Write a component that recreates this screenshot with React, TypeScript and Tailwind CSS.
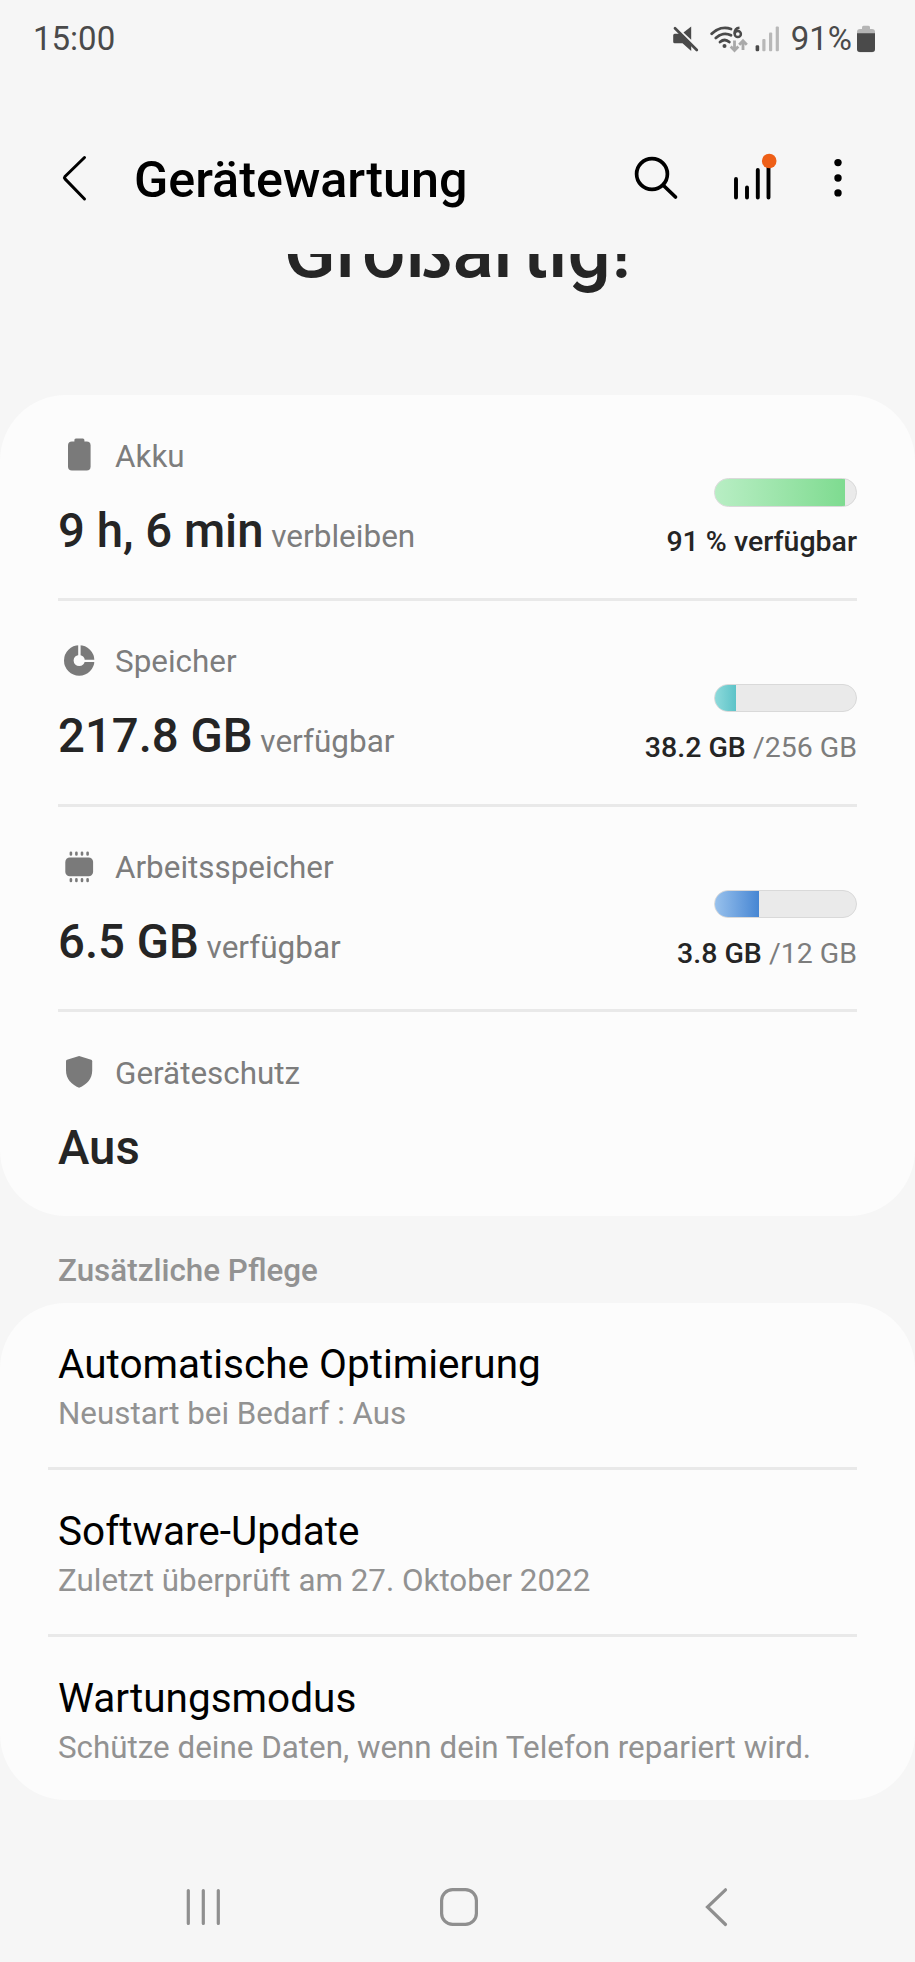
import type { ReactNode } from "react";

interface StatRowProps {
  icon: ReactNode;
  label: string;
  value: string;
  suffix?: string;
  percent?: number;
  barClass?: string;
  used?: string;
  total?: string;
  last?: boolean;
}

interface CareItemProps {
  title: string;
  subtitle: string;
  last?: boolean;
}

const BatteryIcon = () => (
  <svg width="42" height="40" viewBox="0 0 42 40" fill="#7a7a7a">
    <rect x="10" y="5.6" width="22.6" height="28.8" rx="4" />
    <rect x="16.4" y="2.6" width="10" height="6" rx="1.5" />
  </svg>
);

const StorageIcon = () => (
  <svg width="42" height="40" viewBox="0 0 42 40" fill="none">
    <circle cx="21.2" cy="18.5" r="10.4" stroke="#7a7a7a" strokeWidth="9.6" />
    <path d="M21.4 3v14M22 18.9h15" stroke="#fcfcfc" strokeWidth="2.4" />
  </svg>
);

const MemoryIcon = () => (
  <svg width="42" height="40" viewBox="0 0 42 40" fill="#7a7a7a">
    <rect x="7.3" y="9.5" width="27.8" height="18.8" rx="4.5" />
    <path
      d="M12.9 4.8v1.6M18.4 4.8v1.6M24 4.8v1.6M29.6 4.8v1.6M12.9 31.3v1.6M18.4 31.3v1.6M24 31.3v1.6M29.6 31.3v1.6"
      stroke="#7a7a7a"
      strokeWidth="2.6"
      strokeLinecap="round"
    />
  </svg>
);

const ShieldIcon = () => (
  <svg width="42" height="40" viewBox="0 0 42 40" fill="#7a7a7a">
    <path d="M21.1 3 33.2 6.8q1 .4 1 1.4V17.5c0 8-5.2 14.2-13.1 17.2C13.2 31.7 8 25.5 8 17.5V8.2q0-1 1-1.4Z" />
  </svg>
);

function StatRow({ icon, label, value, suffix, percent, barClass, used, total, last }: StatRowProps) {
  return (
    <div className={`flex h-[205.8px] justify-between ${last ? "" : "border-b-[3px] border-[#e9e9e9]"}`}>
      <div className="pt-[41px]">
        <div className="flex h-[40px] items-center gap-[15px] text-[31.4px] leading-[40px] text-[#7d7d7d]">
          {icon}
          <span className="pt-px">{label}</span>
        </div>
        <p className="mt-[27.5px] text-[31.5px] leading-[54px] whitespace-nowrap text-[#7d7d7d]">
          <span className="text-[47.3px] font-medium text-[#252525]">{value}</span>
          {suffix && <span> {suffix}</span>}
        </p>
      </div>

      {percent !== undefined && (
        <div className="flex flex-col items-end pt-[83px]">
          <div className="h-[28.5px] w-[143px] overflow-hidden rounded-full border border-[#d9d9d9] bg-[#eaeaea]">
            <div className={`h-full bg-linear-to-r ${barClass}`} style={{ width: `${percent}%` }} />
          </div>
          <p className="mt-[17.5px] text-[28.5px] leading-[36px] whitespace-nowrap text-[#7d7d7d]">
            <span className="font-medium text-[#252525]">{used}</span>
            {total && <span> {total}</span>}
          </p>
        </div>
      )}
    </div>
  );
}

function CareItem({ title, subtitle, last }: CareItemProps) {
  return (
    <div className={`h-[166.8px] pt-[41px] pl-[10px] whitespace-nowrap ${last ? "" : "border-b-[3px] border-[#e9e9e9]"}`}>
      <h3 className="text-[40.5px] leading-[40px] text-black">{title}</h3>
      <p className="mt-[10px] text-[31.35px] leading-[40px] text-[#929292]">{subtitle}</p>
    </div>
  );
}

function StatusBar() {
  return (
    <div className="flex h-[78px] items-center justify-between pr-[40px] pl-[33px] text-[33px] leading-[40px] text-[#4a4a4a]">
      <span>15:00</span>
      <div className="flex items-center">
        <svg width="26" height="28" viewBox="0 0 26 28" fill="#4a4a4a">
          <path d="M18.2 1.5V14.8L10.500 7.600Z" />
          <path d="M1.700 8.700H8L18.200 19.500V26L9.500 18.300H1.700Q.2 18.300.2 16.800V10.200Q.2 8.700 1.700 8.700Z" />
          <path d="M2 3.2 23.800 25" stroke="#4a4a4a" strokeWidth="2.7" strokeLinecap="round" />
        </svg>
        <svg className="ml-[11px]" width="38" height="28" viewBox="0 0 38 28" fill="none">
          <g stroke="#4a4a4a" strokeWidth="2.8" strokeLinecap="round">
            <path d="M1.7 8.8C7 3.3 14.5 1.6 21 4" />
            <path d="M5.8 13C10 8.8 16 7.8 21 10.3" />
            <path d="M10 17c3-2.6 6.5-2.6 9.3 0" />
          </g>
          <circle cx="14.5" cy="21" r="2" fill="#4a4a4a" />
          <path d="M29.5 2.8C26.5 3 24.6 5.3 24.6 8.7" stroke="#4a4a4a" strokeWidth="2.6" />
          <circle cx="27.8" cy="9" r="3.1" stroke="#4a4a4a" strokeWidth="2.5" />
          <g stroke="#a9a9a9" strokeWidth="2.8">
            <path d="M24.5 15.5v10M20.7 21.5l3.8 4 3.8-4" />
            <path d="M33 25V16M29.2 19.8l3.8-4 3.8 4" />
          </g>
        </svg>
        <svg className="ml-[7px]" width="25" height="28" viewBox="0 0 25 28" fill="#b8b8b8">
          <rect x=".6" y="20.3" width="3.6" height="6" rx="1.3" fill="#4a4a4a" />
          <rect x="7.3" y="14" width="3.2" height="12.3" rx="1" />
          <rect x="14" y="7.5" width="3.2" height="18.8" rx="1" />
          <rect x="20.7" y="1.5" width="3.2" height="24.8" rx="1" />
        </svg>
        <span className="ml-[11px]">91%</span>
        <svg className="ml-[5px]" width="18" height="28" viewBox="0 0 18 28" fill="#b5b5b5">
          <rect x="5" y=".7" width="8" height="6" rx="1.5" />
          <rect x="0" y="4" width="18" height="23.3" rx="3" />
          <path d="M0 8.3h18v15.7q0 3-3 3H3q-3 0-3-3Z" fill="#4a4a4a" />
        </svg>
      </div>
    </div>
  );
}

function Header() {
  return (
    <header className="flex h-[176px] items-center pt-[24px] pr-[72px] pl-[61px]">
      <svg width="26" height="48" viewBox="0 0 26 48" fill="none" stroke="#000" strokeWidth="3" strokeLinecap="round" strokeLinejoin="round">
        <path d="M23.5 3.5 4 22.5q-1 1.2 0 2.4L23.5 45" />
      </svg>
      <h1 className="ml-[47px] flex-1 pt-[4px] text-[50.3px] leading-[56px] font-medium text-black">Gerätewartung</h1>
      <svg width="46" height="48" viewBox="0 0 46 48" fill="none" stroke="#000" strokeWidth="3.7" strokeLinecap="round">
        <circle cx="19" cy="20" r="15.4" />
        <path d="m30.5 31.5 12 11.5" />
      </svg>
      <svg className="ml-[54px]" width="46" height="60" viewBox="0 0 46 60" fill="none" stroke="#000" strokeWidth="3.9" strokeLinecap="round">
        <path d="M3 31v18.5M14 39.5v10M24.8 22v27.5M35.5 18v31.5" />
        <circle cx="36.2" cy="13" r="7.3" fill="#ee5f17" stroke="none" />
      </svg>
      <svg className="ml-[54px]" width="10" height="48" viewBox="0 0 10 48">
        <circle cx="5" cy="8.6" r="3.7" />
        <circle cx="5" cy="24" r="3.7" />
        <circle cx="5" cy="38.9" r="3.7" />
      </svg>
    </header>
  );
}

function NavBar() {
  return (
    <nav className="flex items-center pt-[87px] pl-[185px]">
      <svg width="38" height="40" viewBox="0 0 38 40" stroke="#8f8f8f" strokeWidth="3.2" strokeLinecap="round">
        <path d="M3.3 3.5v33M18.3 3.5v33M33.3 3.5v33" />
      </svg>
      <svg className="ml-[216px]" width="40" height="40" viewBox="0 0 40 40" fill="none" stroke="#8f8f8f" strokeWidth="3.2">
        <rect x="2.6" y="2.6" width="34.8" height="34.8" rx="11" />
      </svg>
      <svg className="ml-[226px]" width="24" height="40" viewBox="0 0 24 40" fill="none" stroke="#8f8f8f" strokeWidth="3.2" strokeLinecap="round">
        <path d="M20.5 2.8 2.5 20l18 17.5" />
      </svg>
    </nav>
  );
}

export default function App() {
  return (
    <div className="h-[1962px] w-[915px] overflow-hidden bg-[#f6f6f6] font-['Roboto',sans-serif]">
      <StatusBar />
      <Header />

      {/* headline scrolled partly under the header */}
      <div className="flex h-[141px] items-start justify-center overflow-hidden">
        <h2 className="-mt-[48px] text-[76.5px] leading-[91px] font-medium text-[#252525]">Großartig!</h2>
      </div>

      <section className="h-[821px] rounded-[66px] bg-[#fcfcfc] px-[58px]">
        <StatRow
          icon={<BatteryIcon />}
          label="Akku"
          value="9 h, 6 min"
          suffix="verbleiben"
          percent={92}
          barClass="from-[#b8eec4] to-[#7edb90]"
          used="91 % verfügbar"
        />
        <StatRow
          icon={<StorageIcon />}
          label="Speicher"
          value="217.8 GB"
          suffix="verfügbar"
          percent={14.9}
          barClass="from-[#8ddadb] to-[#5cc3c8]"
          used="38.2 GB"
          total="/256 GB"
        />
        <StatRow
          icon={<MemoryIcon />}
          label="Arbeitsspeicher"
          value="6.5 GB"
          suffix="verfügbar"
          percent={31}
          barClass="from-[#98c1ec] to-[#4686d3]"
          used="3.8 GB"
          total="/12 GB"
        />
        <StatRow icon={<ShieldIcon />} label="Geräteschutz" value="Aus" last />
      </section>

      <h2 className="h-[87px] pt-[35px] pl-[58px] text-[31.4px] leading-[40px] font-medium text-[#929292]">
        Zusätzliche Pflege
      </h2>

      <section className="h-[497px] rounded-[66px] bg-[#fcfcfc] pr-[58px] pl-[48px]">
        <CareItem title="Automatische Optimierung" subtitle="Neustart bei Bedarf : Aus" />
        <CareItem title="Software-Update" subtitle="Zuletzt überprüft am 27. Oktober 2022" />
        <CareItem title="Wartungsmodus" subtitle="Schütze deine Daten, wenn dein Telefon repariert wird." last />
      </section>

      <NavBar />
    </div>
  );
}
